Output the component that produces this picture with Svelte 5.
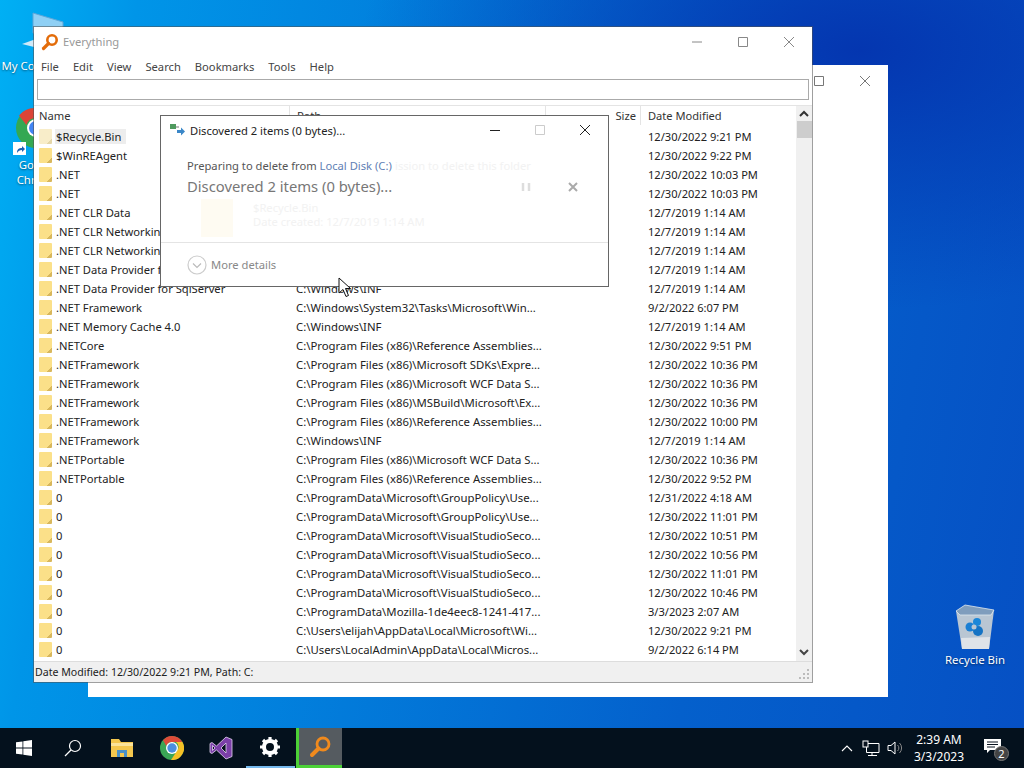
<script>
  const win7 = 'C:\\Windows\\INF';
  const rows = [
    ['$Recycle.Bin','','12/30/2022 9:21 PM'],
    ['$WinREAgent','','12/30/2022 9:22 PM'],
    ['.NET','','12/30/2022 10:03 PM'],
    ['.NET','','12/30/2022 10:03 PM'],
    ['.NET CLR Data','','12/7/2019 1:14 AM'],
    ['.NET CLR Networking','','12/7/2019 1:14 AM'],
    ['.NET CLR Networking 4.0.0.0','','12/7/2019 1:14 AM'],
    ['.NET Data Provider for Oracle','','12/7/2019 1:14 AM'],
    ['.NET Data Provider for SqlServer',win7,'12/7/2019 1:14 AM'],
    ['.NET Framework','C:\\Windows\\System32\\Tasks\\Microsoft\\Win...','9/2/2022 6:07 PM'],
    ['.NET Memory Cache 4.0',win7,'12/7/2019 1:14 AM'],
    ['.NETCore','C:\\Program Files (x86)\\Reference Assemblies...','12/30/2022 9:51 PM'],
    ['.NETFramework','C:\\Program Files (x86)\\Microsoft SDKs\\Expre...','12/30/2022 10:36 PM'],
    ['.NETFramework','C:\\Program Files (x86)\\Microsoft WCF Data S...','12/30/2022 10:36 PM'],
    ['.NETFramework','C:\\Program Files (x86)\\MSBuild\\Microsoft\\Ex...','12/30/2022 10:36 PM'],
    ['.NETFramework','C:\\Program Files (x86)\\Reference Assemblies...','12/30/2022 10:00 PM'],
    ['.NETFramework',win7,'12/7/2019 1:14 AM'],
    ['.NETPortable','C:\\Program Files (x86)\\Microsoft WCF Data S...','12/30/2022 10:36 PM'],
    ['.NETPortable','C:\\Program Files (x86)\\Reference Assemblies...','12/30/2022 9:52 PM'],
    ['0','C:\\ProgramData\\Microsoft\\GroupPolicy\\Use...','12/31/2022 4:18 AM'],
    ['0','C:\\ProgramData\\Microsoft\\GroupPolicy\\Use...','12/30/2022 11:01 PM'],
    ['0','C:\\ProgramData\\Microsoft\\VisualStudioSeco...','12/30/2022 10:51 PM'],
    ['0','C:\\ProgramData\\Microsoft\\VisualStudioSeco...','12/30/2022 10:56 PM'],
    ['0','C:\\ProgramData\\Microsoft\\VisualStudioSeco...','12/30/2022 11:01 PM'],
    ['0','C:\\ProgramData\\Microsoft\\VisualStudioSeco...','12/30/2022 10:46 PM'],
    ['0','C:\\ProgramData\\Mozilla-1de4eec8-1241-417...','3/3/2023 2:07 AM'],
    ['0','C:\\Users\\elijah\\AppData\\Local\\Microsoft\\Wi...','12/30/2022 9:21 PM'],
    ['0','C:\\Users\\LocalAdmin\\AppData\\Local\\Micros...','9/2/2022 6:14 PM'],
  ];
  const menus = ['File','Edit','View','Search','Bookmarks','Tools','Help'];
</script>

<div class="screen">
  <div class="desktop">
    <div class="dicon mycomp">
      <svg width="44" height="40" viewBox="0 0 44 40"><path d="M13 2l30 9v18l-30-7z" fill="#8fd0f5" stroke="#5ea6d8"/><path d="M2 33l14-5 22 6-12 5z" fill="#cfe9f8"/></svg>
      <span>My Computer</span>
    </div>
    <div class="dicon chrome">
      <svg width="44" height="44" viewBox="0 0 44 44"><circle cx="22" cy="22" r="20" fill="#34a853"/><path d="M22 2a20 20 0 0 1 17.300 10H22a10 10 0 0 0-9.600 7L5 9.500A20 20 0 0 1 22 2z" fill="#db4437"/><circle cx="22" cy="22" r="9" fill="#fff"/><circle cx="22" cy="22" r="7" fill="#4285f4"/></svg>
      <i class="shortcut"><svg width="12" height="12" viewBox="0 0 12 12"><path d="M3 10c0-4 2-5 5-5V3l3 3-3 3V7c-2 0-4 1-5 3z" fill="#1c5fb4"/></svg></i>
      <span>Google<br/>Chrome</span>
    </div>
    <div class="dicon bin">
      <svg width="40" height="46" viewBox="0 0 40 46"><path d="M1 7l38-1-5 39H7z" fill="#b9c6d3"/><path d="M1 7L10 1l29 5-3 5-31 0z" fill="#7f9dbd" stroke="#dfe8f0" stroke-width=".8"/><path d="M6 34l29-1-1 12H7z" fill="#dfe3e8"/><circle cx="15" cy="23" r="4.500" fill="#1a7fd4"/><circle cx="22" cy="18" r="4" fill="#1a86d8"/><circle cx="23" cy="27" r="5" fill="#1573c4"/><circle cx="19" cy="23" r="2.500" fill="#b9c6d3"/></svg>
      <span>Recycle Bin</span>
    </div>

    <div class="backwin">
      <div class="backctl">
        <svg width="12" height="12" viewBox="0 0 12 12"><path d="M1.500 1.500h9v9h-9z" fill="none" stroke="#777"/></svg>
        <svg width="12" height="12" viewBox="0 0 12 12"><path d="M1 1l10 10M11 1L1 11" stroke="#777"/></svg>
      </div>
    </div>

    <div class="everything">
      <div class="titlebar">
        <svg class="logo" width="18" height="18" viewBox="0 0 18 18"><circle cx="11" cy="7" r="4.700" fill="#fff" stroke="#e36c0a" stroke-width="2.600"/><path d="M7.500 10.500L2.500 15.500" stroke="#e36c0a" stroke-width="3.200" stroke-linecap="round"/></svg>
        <span class="wtitle">Everything</span>
        <div class="wctl">
          <svg width="12" height="12" viewBox="0 0 12 12"><path d="M1 6h10" stroke="#888"/></svg>
          <svg width="12" height="12" viewBox="0 0 12 12"><path d="M1.500 1.500h9v9h-9z" fill="none" stroke="#888"/></svg>
          <svg width="12" height="12" viewBox="0 0 12 12"><path d="M1 1l10 10M11 1L1 11" stroke="#888"/></svg>
        </div>
      </div>
      <div class="menubar">{#each menus as m}<span>{m}</span>{/each}</div>
      <div class="search"></div>
      <div class="listwrap">
        <div class="listmain">
          <div class="lhead">
            <span class="c-name">Name</span>
            <span class="c-path">Path</span>
            <span class="c-size">Size</span>
            <span class="c-date">Date Modified</span>
          </div>
          <div class="rows">
            {#each rows as r, i}
              <div class="row">
                <span class="c-name">
                  <i class="folder" class:pale={i === 0}></i>
                  <span class="nm" class:sel={i === 0}>{r[0]}</span>
                </span>
                <span class="c-path">{r[1]}</span>
                <span class="c-size"></span>
                <span class="c-date">{r[2]}</span>
              </div>
            {/each}
          </div>
        </div>
        <div class="scroll">
          <svg width="12" height="8" viewBox="0 0 12 8"><path d="M2 6l4-4 4 4" fill="none" stroke="#333" stroke-width="2"/></svg>
          <div class="thumb"></div>
          <div class="track"></div>
          <svg width="12" height="8" viewBox="0 0 12 8"><path d="M2 2l4 4 4-4" fill="none" stroke="#444" stroke-width="2"/></svg>
        </div>
      </div>
      <div class="status">
        <span>Date Modified: 12/30/2022 9:21 PM, Path: C:</span>
        <svg class="grip" width="11" height="11" viewBox="0 0 11 11" fill="#bbb"><rect x="8" y="0" width="2" height="2"/><rect x="4" y="4" width="2" height="2"/><rect x="8" y="4" width="2" height="2"/><rect x="0" y="8" width="2" height="2"/><rect x="4" y="8" width="2" height="2"/><rect x="8" y="8" width="2" height="2"/></svg>
      </div>
    </div>

    <div class="dialog">
      <div class="dtitle">
        <svg width="16" height="14" viewBox="0 0 16 14"><rect x="0" y="1" width="6" height="5" fill="#4f9a5e"/><rect x="6" y="3" width="3" height="2" fill="#bbb"/><path d="M7 7h4V4.500l4 4-4 4V10H7z" fill="#3a87c8"/></svg>
        <span>Discovered 2 items (0 bytes)...</span>
        <div class="dctl">
          <svg width="12" height="12" viewBox="0 0 12 12"><path d="M1 6.500h10" stroke="#222"/></svg>
          <svg width="12" height="12" viewBox="0 0 12 12"><path d="M1.500 1.500h9v9h-9z" fill="none" stroke="#ccc"/></svg>
          <svg width="12" height="12" viewBox="0 0 12 12"><path d="M1 1l10 10M11 1L1 11" stroke="#222"/></svg>
        </div>
      </div>
      <div class="dbody">
        <div class="prep">
          <span>Preparing to delete from <em>Local Disk (C:)</em></span>
          <span class="ghost g1">ission to delete this folder</span>
        </div>
        <div class="disc">
          <span>Discovered 2 items (0 bytes)...</span>
          <div class="discctl">
            <svg width="12" height="12" viewBox="0 0 12 12"><path d="M3 2v8M9 2v8" stroke="#ddd" stroke-width="2.500"/></svg>
            <svg width="12" height="12" viewBox="0 0 12 12"><path d="M2 2l8 8M10 2L2 10" stroke="#aaa" stroke-width="2"/></svg>
          </div>
        </div>
        <div class="ghostrow">
          <i class="gfolder"></i>
          <div class="gtext">
            <span class="ghost">$Recycle.Bin</span>
            <span class="ghost">Date created: 12/7/2019 1:14 AM</span>
          </div>
        </div>
      </div>
      <div class="dfoot">
        <svg width="20" height="20" viewBox="0 0 20 20"><circle cx="10" cy="10" r="9" fill="none" stroke="#ccc" stroke-width="1.200"/><path d="M6 8.500l4 4 4-4" fill="none" stroke="#bbb" stroke-width="1.200"/></svg>
        <span>More details</span>
      </div>
    </div>

    <svg class="cursor" width="14" height="21" viewBox="0 0 14 21"><path d="M1 1v15l4-3.500 3 7 2.500-1-3-7H12.500z" fill="#fff" stroke="#111"/></svg>
  </div>

  <div class="taskbar">
    <div class="tb start"><svg width="16" height="16" viewBox="0 0 16 16" fill="#fff"><path d="M0 2.300l6.500-.9v6.200H0zM7.300 1.300L16 0v7.600H7.300zM0 8.400h6.500v6.200L0 13.700zM7.300 8.400H16V16l-8.700-1.200z"/></svg></div>
    <div class="tb"><svg width="18" height="18" viewBox="0 0 18 18"><circle cx="11" cy="7" r="5.500" fill="none" stroke="#fff" stroke-width="1.200"/><path d="M7 11l-6 6" stroke="#fff" stroke-width="1.300"/></svg></div>
    <div class="tb"><svg width="24" height="20" viewBox="0 0 24 20"><path d="M1 1h8l2 3h12v15H1z" fill="#f4c74e"/><path d="M1 5h22v3H1z" fill="#fbe39a"/><path d="M7 19v-7h10v7h-3v-4h-4v4z" fill="#4a90c8"/></svg></div>
    <div class="tb"><svg width="24" height="24" viewBox="0 0 24 24"><circle cx="12" cy="12" r="12" fill="#3aa655"/><path d="M12 0a12 12 0 0 1 10.400 6H12a6 6 0 0 0-5.700 4L3 4.200A12 12 0 0 1 12 0z" fill="#dd4b39"/><path d="M22.400 6A12 12 0 0 1 11 24l5.500-8.500A6 6 0 0 0 16 6z" fill="#f6c026"/><circle cx="12" cy="12" r="6" fill="#fff"/><circle cx="12" cy="12" r="4.700" fill="#4a8fe0"/></svg></div>
    <div class="tb"><svg width="24" height="24" viewBox="0 0 24 24"><path d="M17 1l6 2.500v17L17 23 7.500 14 3 17.500 1 16.500v-9l2-1L7.500 10zM17 7l-5 5 5 5zM3.500 9.500v5L6 12z" fill="#7b3fa8" stroke="#e6d6f2" stroke-width=".8"/></svg></div>
    <div class="tb active"><svg width="20" height="20" viewBox="0 0 20 20"><circle cx="10" cy="10" r="6" fill="none" stroke="#fff" stroke-width="4" /><path d="M10 0v3M10 17v3M0 10h3M17 10h3M3 3l2 2M15 15l2 2M3 17l2-2M15 5l2-2" stroke="#fff" stroke-width="3.200"/></svg></div>
    <div class="tb evt"><svg width="24" height="24" viewBox="0 0 24 24"><circle cx="15" cy="9" r="6" fill="none" stroke="#f08a1d" stroke-width="2.800"/><path d="M10.500 13.500L4 20" stroke="#f08a1d" stroke-width="4" stroke-linecap="round"/></svg></div>
    <div class="tray">
      <svg width="12" height="8" viewBox="0 0 12 8"><path d="M1 7l5-5 5 5" fill="none" stroke="#fff" stroke-width="1.100"/></svg>
      <svg width="18" height="16" viewBox="0 0 18 16"><path d="M4.500 3.500H17v9H4.500zM10 12.500v2.500M6 15.500h9" fill="none" stroke="#fff"/><rect x="1" y="1" width="5" height="6" fill="#0a1420" stroke="#fff"/></svg>
      <svg width="16" height="16" viewBox="0 0 16 16"><path d="M1 5.500h3l4-3.500v12l-4-3.500H1z" fill="none" stroke="#fff"/><path d="M10.500 5a4 4 0 0 1 0 6M12.500 3a7 7 0 0 1 0 10" fill="none" stroke="#888"/></svg>
      <div class="clock"><span>2:39 AM</span><span>3/3/2023</span></div>
      <div class="notif">
        <svg width="18" height="16" viewBox="0 0 18 16"><path d="M0 1h17v11H6l-3 3v-3H0z" fill="#fff"/><path d="M3 4h11M3 6.500h11M3 9h8" stroke="#0a1420"/></svg>
        <b>2</b>
      </div>
    </div>
  </div>
</div>

<style>
  :global(body) { margin: 0; }
  .screen {
    width: 1024px; height: 768px; overflow: hidden;
    display: flex; flex-direction: column;
    font-family: "Noto Sans", "Open Sans", sans-serif; font-size: 11.200px; color: #222;
  }
  .desktop {
    flex: 1; position: relative;
    background:
      radial-gradient(ellipse 500px 260px at 860px 50px, #0436b0 0%, rgba(4,54,176,0) 100%),
      linear-gradient(100deg, #00b0f4 0%, #0095e8 12%, #0460cc 70%, #0650c4 100%);
  }
  .dicon { position: absolute; display: flex; flex-direction: column; align-items: center; color: #fff; text-align: center; font-size: 11.400px; line-height: 15px; text-shadow: 0 1px 2px rgba(0,0,0,.5); }
  .dicon span { display: block; }
  .mycomp { left: -2px; top: 11px; width: 88px; }
  .mycomp span { margin: 7px 8px 0 0; white-space: nowrap; }
  .chrome { left: 0; top: 106px; width: 76px; }
  .chrome > svg { margin-left: -4px; }
  .chrome span { margin-top: 7px; }
  .shortcut { position: absolute; left: 13px; top: 36px; width: 13px; height: 13px; background: #fff; display: flex; align-items: center; justify-content: center; }
  .bin { left: 935px; top: 604px; width: 80px; }
  .bin span { margin-top: 2px; }

  .backwin { position: absolute; left: 88px; top: 65px; width: 800px; height: 632px; background: #fff; }
  .backctl { position: absolute; top: 10px; right: 17px; display: flex; gap: 34px; }

  .everything {
    position: absolute; left: 34px; top: 27px; width: 778px; height: 655px;
    background: #fff; display: flex; flex-direction: column; box-shadow: 0 0 0 1px rgba(80,80,80,.55);
  }
  .titlebar { height: 29px; display: flex; align-items: center; padding-left: 7px; flex: none; }
  .wtitle { margin-left: 4px; color: #999; }
  .wctl { margin-left: auto; display: flex; gap: 34px; margin-right: 17px; }
  .menubar { height: 20px; display: flex; align-items: center; gap: 14px; padding-left: 7px; flex: none; color: #444; }
  .search { height: 21px; margin: 3px 3px 0; border: 1px solid #aaa; flex: none; box-sizing: border-box; }
  .listwrap { flex: 1; display: flex; margin-top: 5px; min-height: 0; border-top: 1px solid #e4e4e4; }
  .listmain { flex: 1; min-width: 0; display: flex; flex-direction: column; }
  .lhead { height: 19px; display: flex; align-items: stretch; flex: none; color: #333; }
  .lhead span { line-height: 19px; }
  .lhead .c-path, .lhead .c-date { border-left: 1px solid #e4e4e4; }
  .lhead .c-size { border-left: 1px solid #e4e4e4; }
  .c-name { width: 255px; flex: none; padding-left: 5px; box-sizing: border-box; display: flex; align-items: center; }
  .c-path { width: 256px; flex: none; padding-left: 7px; box-sizing: border-box; font-size: 11.350px; }
  .c-size { width: 95px; flex: none; text-align: right; padding-right: 4px; box-sizing: border-box; }
  .c-date { flex: 1; padding-left: 7px; box-sizing: border-box; font-size: 11.100px; }
  .row .c-date { padding-left: 8px; }
  .rows { flex: 1; overflow: hidden; padding-top: 2px; }
  .row { height: 19px; display: flex; align-items: center; white-space: nowrap; color: #222; }
  .folder {
    width: 13px; height: 15px; box-sizing: border-box; margin-right: 3px; flex: none; border-radius: 1px;
    background: linear-gradient(135deg, #fbe089 0 80%, #d8b75c 80% 100%);
  }
  .folder.pale { background: linear-gradient(135deg, #f8edc9 0 80%, #e4d6a8 80% 100%); }
  .nm { padding: 0 5px 0 1px; }
  .sel { background: #ededed; }
  .scroll { width: 16px; flex: none; background: #f0f0f0; display: flex; flex-direction: column; align-items: center; padding: 4px 0 5px; box-sizing: border-box; }
  .thumb { width: 15px; height: 17px; background: #cdcdcd; margin-top: 3px; }
  .track { flex: 1; }
  .status { height: 21px; flex: none; background: #f0f0f0; display: flex; align-items: center; padding: 0 0 1px 1px; position: relative; border-top: 1px solid #ddd; box-sizing: border-box; color: #222; font-size: 10.600px; }
  .grip { position: absolute; right: 2px; bottom: 2px; }

  .dialog {
    position: absolute; left: 160px; top: 115px; width: 449px; height: 172px;
    background: #fff; border: 1px solid #666; box-sizing: border-box; display: flex; flex-direction: column;
  }
  .dtitle { height: 28px; flex: none; display: flex; align-items: center; padding-left: 9px; gap: 4px; color: #222; }
  .dctl { margin-left: auto; display: flex; gap: 33px; margin-right: 17px; }
  .dbody { flex: 1; padding: 13px 26px 0; min-height: 0; }
  .prep { display: flex; justify-content: space-between; color: #555; line-height: 18px; white-space: nowrap; position: relative; }
  .prep em { font-style: normal; color: #5f7fb5; }
  .prep .g1 { position: absolute; left: 208px; top: 0; }
  .ghost { color: #f2f2f2; }
  .disc { display: flex; align-items: center; font-size: 14.800px; color: #777; line-height: 24px; margin-top: -1px; }
  .discctl { margin-left: auto; display: flex; gap: 35px; margin: 2px 3px 0 auto; }
  .ghostrow { display: flex; margin-top: 1px; gap: 20px; padding-left: 14px; }
  .gfolder { width: 32px; height: 38px; background: #fefbf2; flex: none; }
  .gtext { display: flex; flex-direction: column; line-height: 14px; padding-top: 2px; }
  .dfoot { height: 43px; flex: none; border-top: 1px solid #e4e4e4; display: flex; align-items: center; padding-left: 26px; gap: 4px; color: #888; }
  .cursor { position: absolute; left: 338px; top: 277px; }

  .taskbar { height: 40px; flex: none; background: #04111d; display: flex; align-items: center; font-size: 12px; }
  .tb { width: 49.400px; height: 40px; display: flex; align-items: center; justify-content: center; flex: none; box-sizing: border-box; }
  .start { margin-left: -1px; }
  .active { border-bottom: 2px solid #76b9ed; width: 49px; }
  .evt { background: #555b60; width: 46px; border-left: 3px solid #4cd137; border-bottom: 3px solid #4cd137; margin-left: 1px; }
  .tray { margin-left: auto; display: flex; align-items: center; color: #fff; height: 40px; padding-right: 7px; }
  .tray > svg:nth-child(1) { margin-right: 9px; }
  .tray > svg:nth-child(2) { margin-right: 7px; }
  .clock { display: flex; flex-direction: column; align-items: center; width: 68px; line-height: 17px; font-size: 12px; margin-left: 2px; }
  .notif { position: relative; width: 48px; height: 40px; display: flex; align-items: center; justify-content: center; margin-left: -4px; }
  .notif svg { margin-right: 0; margin-top: -4px; }
  .notif b { position: absolute; left: 25px; top: 18px; width: 15px; height: 15px; border-radius: 50%; background: #444; border: 1px solid #777; font-weight: 400; font-size: 11px; line-height: 13px; text-align: center; box-sizing: border-box; }
</style>
